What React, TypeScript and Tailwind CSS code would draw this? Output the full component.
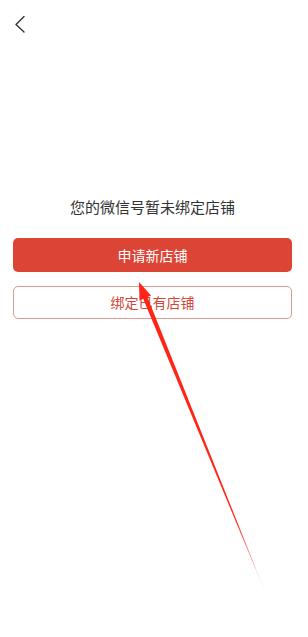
export default function App() {
  return (
    <div
      className="relative w-[308px] h-[637px] bg-white overflow-hidden"
      style={{ fontFamily: '"Noto Sans CJK SC", "Noto Sans", sans-serif' }}
    >
      {/* Header */}
      <div className="h-[48px] flex items-center pl-[14px]">
        <svg width="12" height="18" viewBox="0 0 12 18" fill="none">
          <path d="M10 1.5L2 9.5L10 17" stroke="#333" strokeWidth="1.4" strokeLinecap="round" strokeLinejoin="round" />
        </svg>
      </div>

      {/* Body */}
      <div className="pl-[13px] pr-[16px] pt-[148px]">
        <p className="text-center text-[15px] leading-[22px] text-[#333]">您的微信号暂未绑定店铺</p>
        <button className="mt-[20px] w-full h-[34px] rounded-[5px] bg-[#dc4536] text-white text-[14px]">
          申请新店铺
        </button>
        <button className="mt-[14px] w-full h-[33px] rounded-[5px] border border-[#dc9a91] bg-white text-[#d0473a] text-[14px]">
          绑定已有店铺
        </button>
      </div>

      {/* Annotation arrow */}
      <svg className="absolute inset-0 pointer-events-none" width="308" height="637" viewBox="0 0 308 637">
        <defs>
          <linearGradient id="fade" x1="142" y1="292" x2="268" y2="600" gradientUnits="userSpaceOnUse">
            <stop offset="0" stopColor="#ff2416" />
            <stop offset="0.75" stopColor="#ff2416" />
            <stop offset="1" stopColor="#ff2416" stopOpacity="0" />
          </linearGradient>
        </defs>
        <polygon points="146.2,294 141.9,295.8 268,599" fill="url(#fade)" />
        <polygon points="139,282 151,295.5 139.5,300.5" fill="#ff2416" />
      </svg>
    </div>
  );
}
